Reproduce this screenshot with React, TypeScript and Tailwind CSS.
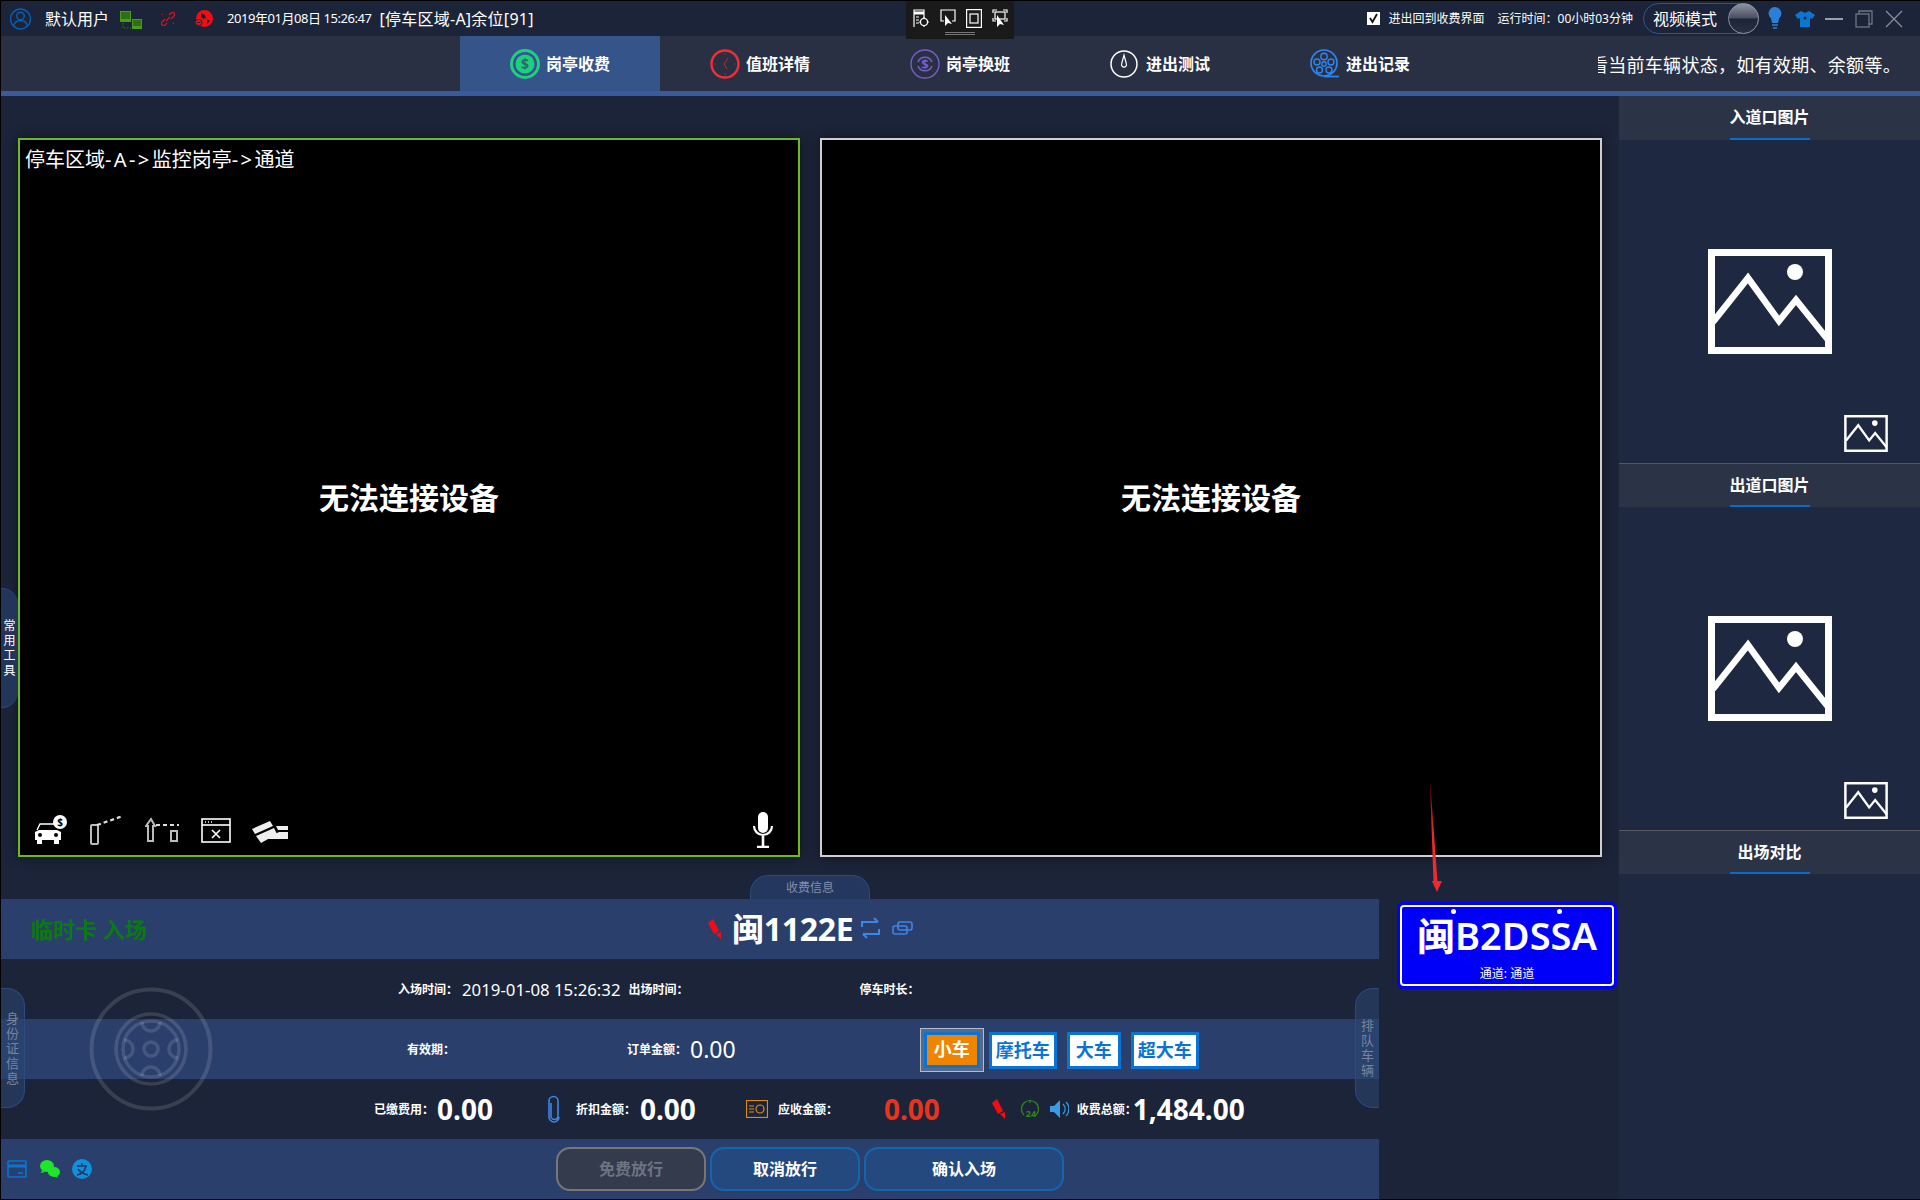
import React from "react";

const FONT = { fontFamily: '"Noto Sans", "Noto Sans CJK SC", sans-serif' };

// ---- small drawn icons ----
function DollarIcon() {
  return (
    <svg width="30" height="30" viewBox="0 0 30 30" fill="none">
      <circle cx="15" cy="15" r="13.5" stroke="#1fcf7f" strokeWidth="3" />
      <circle cx="15" cy="15" r="9.5" fill="#1fcf7f" />
      <text x="15" y="20" textAnchor="middle" fontSize="14" fontWeight="700" fill="#2a6a6a">$</text>
    </svg>
  );
}

function ClockIcon() {
  return (
    <svg width="30" height="30" viewBox="0 0 30 30" fill="none">
      <ellipse cx="15" cy="15" rx="13.5" ry="13.5" stroke="#ef2e38" strokeWidth="2.4" />
      <path d="M18 9l-4 6 3 5" stroke="#c8242f" strokeWidth="1" />
      <path d="M15 4v2M15 24v2M4 15h2M24 15h2" stroke="#7a2a3a" strokeWidth="1.4" />
    </svg>
  );
}

function ShiftIcon() {
  return (
    <svg width="30" height="30" viewBox="0 0 30 30" fill="none">
      <circle cx="15" cy="15" r="14" stroke="#7a5cc8" strokeWidth="1.4" />
      <path d="M8 17a7.5 7.5 0 0 0 14 0M8 13a7.5 7.5 0 0 1 14 0" stroke="#7a5cc8" strokeWidth="1.6" />
      <text x="15" y="20" textAnchor="middle" fontSize="13" fontWeight="700" fill="#7a5cc8">$</text>
    </svg>
  );
}

function GaugeIcon() {
  return (
    <svg width="30" height="30" viewBox="0 0 30 30" fill="none">
      <circle cx="14" cy="15" r="13" stroke="#fff" strokeWidth="1.5" />
      <path d="M14 6l-2.4 9a2.5 2.5 0 1 0 4.8 0z" stroke="#fff" strokeWidth="1.2" />
    </svg>
  );
}

function ReelIcon() {
  return (
    <svg width="30" height="30" viewBox="0 0 30 30" fill="none" stroke="#2e86ee" strokeWidth="1.4">
      <circle cx="14" cy="14" r="13" strokeWidth="1.7" />
      <circle cx="14" cy="7.5" r="3.2" />
      <circle cx="14" cy="15" r="2.2" />
      <circle cx="7" cy="13" r="3" />
      <circle cx="21" cy="13" r="3" />
      <circle cx="9.5" cy="21" r="3" />
      <circle cx="19" cy="21" r="3" />
      <path d="M14 27.5h15" strokeWidth="1.7" />
    </svg>
  );
}

function ImageIcon({ big }: { big?: boolean }) {
  return (
    <svg width={big ? 124 : 44} height={big ? 105 : 37} viewBox="0 0 124 105" fill="none" stroke="#fff">
      <rect x="3.5" y="3.5" width="117" height="98" strokeWidth="7" />
      <path d="M5 73l35-44 31 43 17-21 33 41" strokeWidth="6.5" />
      <circle cx="87" cy="23" r="8" fill="#fff" stroke="none" />
    </svg>
  );
}

function PinIcon({ className = "" }: { className?: string }) {
  return (
    <svg width="15" height="24" viewBox="0 0 15 24" className={className}>
      <path d="M1 6l5-4 6 12-5 3z" fill="#f40c12" />
      <path d="M9 17l5-2 0 7z" fill="#f40c12" />
    </svg>
  );
}

function PlateTools() {
  return (
    <div className="flex items-center gap-[12px] ml-[8px] mt-[-2px]">
      <svg width="19" height="22" viewBox="0 0 19 22" fill="none" stroke="#3c86e6" strokeWidth="2">
        <path d="M1 10V5h16M13 1l4 4M18 12v5H2M6 21l-4-4" />
      </svg>
      <svg width="21" height="14" viewBox="0 0 21 14" fill="none" stroke="#3c86e6" strokeWidth="1.6">
        <rect x="6" y="1" width="14" height="8" rx="2" />
        <rect x="1" y="5" width="14" height="8" rx="2" />
      </svg>
    </div>
  );
}

function Tab({ icon, label, active }: { icon: React.ReactNode; label: string; active?: boolean }) {
  return (
    <div className={`w-[200px] h-full flex items-center pl-[50px] gap-[6px] ${active ? "bg-[#34548a]" : ""}`}>
      {icon}
      <span className="text-[16px] font-bold text-white whitespace-nowrap">{label}</span>
    </div>
  );
}

function PanelHead({ label, line }: { label: string; line?: boolean }) {
  return (
    <div className={`h-[44px] bg-[#2b3346] flex justify-center shrink-0 ${line ? "border-t border-[#55585f]" : ""}`}>
      <div className="h-full w-[80px] border-b-2 border-[#0a6cc4] flex items-center justify-center">
        <span className="text-[16px] font-bold text-white whitespace-nowrap">{label}</span>
      </div>
    </div>
  );
}

function PanelImages() {
  return (
    <div className="h-[323px] flex flex-col pt-[109px]">
      <div className="self-center"><ImageIcon big /></div>
      <div className="self-end mt-[61px] mr-[32px]"><ImageIcon /></div>
    </div>
  );
}

function Label({ text, className = "" }: { text: string; className?: string }) {
  return <span className={`text-[12px] font-bold text-white whitespace-nowrap mt-[2px] ${className}`}>{text}</span>;
}

function Amount({ text, className = "" }: { text: string; className?: string }) {
  return <span className={`text-[28px] leading-none font-bold whitespace-nowrap ${className}`}>{text}</span>;
}

function TypeBtn({ text, w, gap }: { text: string; w: string; gap: string }) {
  return (
    <div className={`${w} ${gap} h-[37px] mt-[2px] bg-white border-[3px] border-[#0a74d6] flex items-center justify-center text-[18px] font-bold text-[#0a74d6] whitespace-nowrap`}>
      {text}
    </div>
  );
}

function SideTab({ text, className }: { text: string; className: string }) {
  return (
    <div className={`absolute flex flex-col items-center justify-center w-[24px] h-[120px] leading-[15px] ${className}`}>
      {text.split("").map((c, i) => (
        <span key={i}>{c}</span>
      ))}
    </div>
  );
}

function VideoBar() {
  return (
    <div className="absolute left-[14px] right-[23px] bottom-[10px] flex items-end text-white">
      {/* car with coin */}
      <svg width="34" height="30" viewBox="0 0 34 30" fill="none" className="mr-[21px]">
        <path d="M3 15l3-6h14" stroke="#fff" strokeWidth="1.4" />
        <path d="M1 17l4-2h18l4 2v8H1z" fill="#fff" />
        <path d="M3 25h5v4H3zM20 25h5v4h-5z" fill="#fff" />
        <circle cx="6" cy="20" r="2" fill="#000" />
        <circle cx="22" cy="20" r="2" fill="#000" />
        <circle cx="26" cy="7" r="7" fill="#fff" />
        <text x="26" y="11" textAnchor="middle" fontSize="10" fontWeight="700" fill="#000">$</text>
      </svg>
      {/* barrier up */}
      <svg width="36" height="30" viewBox="0 0 36 30" fill="none" className="mr-[20px]">
        <rect x="2" y="10" width="7" height="19" rx="1" stroke="#bbb" strokeWidth="2" />
        <path d="M8 10L34 1" stroke="#ddd" strokeWidth="2.2" strokeDasharray="4 3" />
      </svg>
      {/* barrier down */}
      <svg width="34" height="26" viewBox="0 0 34 26" fill="none" className="mr-[22px] mb-[2px]">
        <path d="M3 24V9H1l5-7 4 7H8v15z" stroke="#bbb" strokeWidth="2" />
        <path d="M11 8h23" stroke="#ddd" strokeWidth="2.2" strokeDasharray="4 3" />
        <rect x="26" y="14" width="6" height="10" stroke="#bbb" strokeWidth="2" />
      </svg>
      {/* window close */}
      <svg width="30" height="25" viewBox="0 0 30 25" fill="none" stroke="#fff" className="mr-[21px] mb-[2px]">
        <rect x="1" y="1" width="28" height="23" strokeWidth="1.6" />
        <path d="M1 7h28" strokeWidth="1.6" />
        <path d="M4 4h1M7 4h1M10 4h1" strokeWidth="1.6" />
        <path d="M11 12l8 8M19 12l-8 8" strokeWidth="1.6" />
      </svg>
      {/* cards */}
      <svg width="37" height="24" viewBox="0 0 37 24" fill="#eee" className="mb-[1px]">
        <path d="M0 9L18 1l3 5L3 14z" />
        <path d="M4 16l18-8 3 6-16 9z" />
        <path d="M24 6h12v4H26z" />
        <path d="M27 12h9v7H14z" />
      </svg>
      <svg width="24" height="36" viewBox="0 0 24 36" fill="none" className="ml-auto mb-[-3px]">
        <rect x="7" y="0" width="10" height="21" rx="5" fill="#fff" />
        <path d="M3 14a9 9 0 0 0 18 0" stroke="#fff" strokeWidth="2.2" />
        <path d="M12 24v10M6 35h12" stroke="#fff" strokeWidth="2.6" />
      </svg>
    </div>
  );
}

export default function App() {
  return (
    <div className="relative w-[1920px] h-[1200px] overflow-hidden bg-[#1c2439] border-l border-t border-b border-black text-white flex flex-col" style={FONT}>
      {/* ---- title bar ---- */}
      <div className="h-[35px] shrink-0 flex items-center pl-[9px] pr-[17px]">
        <svg width="21" height="26" viewBox="0 0 21 26" fill="none" stroke="#0a5fae" strokeWidth="1.4">
          <circle cx="10.5" cy="13" r="10" />
          <circle cx="10.5" cy="10" r="3.8" />
          <path d="M3.5 20c1-4 4-5.5 7-5.5s6 1.500 7 5.500" />
        </svg>
        <span className="ml-[14px] text-[16px] whitespace-nowrap">默认用户</span>
        <svg width="22" height="18" viewBox="0 0 22 18" className="ml-[11px] mt-[2px]" fill="none">
          <rect x="0.500" y="0.500" width="10" height="8" fill="#2f6e12" stroke="#4c9a1c" />
          <path d="M0 9h11v2H0z" fill="#4c9a1c" />
          <rect x="12.500" y="8.500" width="9" height="7" fill="#2f6e12" stroke="#4c9a1c" />
          <path d="M12 16h10v2H12z" fill="#4c9a1c" />
          <path d="M3 12v5h8" stroke="#2f7012" strokeWidth="1.200" strokeDasharray="1.500 1.500" />
        </svg>
        <svg width="14" height="14" viewBox="0 0 14 14" fill="none" stroke="#d8121a" strokeWidth="1.300" className="ml-[19px] mt-[1px]">
          <path d="M8 3l2-2a2 2 0 0 1 3 3l-3 3" />
          <path d="M6 11l-2 2a2 2 0 0 1-3-3l3-3" />
          <path d="M5 9l4-4" />
          <path d="M1 2l1 1M12 11l1 1" strokeDasharray="1 1" />
        </svg>
        <svg width="18" height="17" viewBox="0 0 18 17" className="ml-[20px]">
          <circle cx="9.500" cy="8.500" r="8.500" fill="#f30c10" />
          <path d="M6 3l4 2 1 3-3 1-2-2zM12 9l3 2-3 3z" fill="#1c2439" />
          <ellipse cx="3.500" cy="12.500" rx="3.500" ry="3" fill="#f30c10" stroke="#1c2439" />
          <path d="M1.500 12.500h4" stroke="#1c2439" />
        </svg>
        <span className="ml-[14px] text-[13px] whitespace-nowrap tracking-[-0.45px]">2019年01月08日 15:26:47</span>
        <span className="ml-[8px] text-[16px] whitespace-nowrap tracking-[0.25px]">[停车区域-A]余位[91]</span>

        <div className="ml-auto flex items-center">
          <div className="w-[13px] h-[13px] bg-white flex items-center justify-center">
            <svg width="11" height="11" viewBox="0 0 11 11" fill="none" stroke="#111" strokeWidth="1.800">
              <path d="M2 5l2.500 4L9 1" />
            </svg>
          </div>
          <span className="ml-[9px] text-[12px] whitespace-nowrap">进出回到收费界面</span>
          <span className="ml-[13px] text-[12px] whitespace-nowrap">运行时间：00小时03分钟</span>
          <div className="ml-[10px] w-[116px] h-[31px] rounded-full border border-[#2f5590] flex items-center pl-[9px] relative">
            <span className="text-[16px] whitespace-nowrap">视频模式</span>
            <div className="absolute right-[-1px] top-[-1px] w-[31px] h-[31px] rounded-full border border-[#8a8f9c] bg-[linear-gradient(#8d93a0_0%,#4a4f60_48%,#1c2438_52%,#2a3044_100%)]" />
          </div>
          <svg width="14" height="26" viewBox="0 0 14 26" className="ml-[9px]">
            <path d="M7 1a6.500 6.500 0 0 1 4 11.500L10 17H4l-1-4.500A6.500 6.500 0 0 1 7 1z" fill="#2a80d8" />
            <path d="M4 19h6M5 22h4" stroke="#2a80d8" strokeWidth="1.600" />
          </svg>
          <svg width="20" height="16" viewBox="0 0 20 16" className="ml-[13px]">
            <path d="M6 0l4 2 4-2 6 4-3 4-2-1v9H5V7L3 8 0 4z" fill="#0a76d0" />
            <circle cx="10" cy="7" r="1.500" fill="#1c2438" />
          </svg>
          <div className="ml-[10px] w-[18px] h-[2px] bg-[#9aa0ac]" />
          <svg width="18" height="18" viewBox="0 0 18 18" fill="none" stroke="#6f7584" strokeWidth="1.300" className="ml-[12px]">
            <path d="M4 4V1h13v13h-3" />
            <rect x="1" y="4" width="13" height="13" />
          </svg>
          <svg width="18" height="18" viewBox="0 0 18 18" fill="none" stroke="#8a8f9c" strokeWidth="1.200" className="ml-[12px]">
            <path d="M1 1l16 16M17 1L1 17" />
          </svg>
        </div>
      </div>

      {/* ---- nav row ---- */}
      <div className="h-[60px] shrink-0 bg-[#2a3044] border-b-[5px] border-[#3a5a9a] flex items-stretch pl-[459px]">
        <Tab active icon={<DollarIcon />} label="岗亭收费" />
        <Tab icon={<ClockIcon />} label="值班详情" />
        <Tab icon={<ShiftIcon />} label="岗亭换班" />
        <Tab icon={<GaugeIcon />} label="进出测试" />
        <Tab icon={<ReelIcon />} label="进出记录" />
        <div className="ml-[138px] w-[303px] overflow-hidden flex justify-end items-center pt-[3px]">
          <span className="shrink-0 text-[18px] tracking-[0.3px] whitespace-nowrap">看当前车辆状态，如有效期、余额等。</span>
        </div>
      </div>

      {/* ---- main ---- */}
      <div className="flex-1 flex min-h-0">
        <div className="relative w-[1618px] shrink-0 flex flex-col">
          <div className="flex gap-[20px] pl-[17px] pt-[42px]">
            <div className="relative w-[782px] h-[719px] bg-black border-2 border-[#6fb81f] flex items-center justify-center shadow-[0_0_12px_rgba(0,0,0,0.45)]">
              <span className="absolute left-[5px] top-[5px] text-[20px] whitespace-nowrap">
                停车区域<span className="tracking-[2.4px]">-A-&gt;</span>监控岗亭<span className="tracking-[2.4px]">-&gt;</span>通道
              </span>
              <span className="text-[30px] font-bold">无法连接设备</span>
              <VideoBar />
            </div>
            <div className="w-[782px] h-[719px] bg-black border-2 border-[#cfcfcf] flex items-center justify-center shadow-[0_0_12px_rgba(0,0,0,0.45)]">
              <span className="text-[30px] font-bold">无法连接设备</span>
            </div>
          </div>

          <div className="h-[18px]" />
          <div className="h-[24px] pl-[749px]">
            <div className="w-[120px] h-full bg-[#24375e] border border-b-0 border-[#2a4a80] rounded-t-[18px] text-[12px] text-[#8290a8] flex items-center justify-center">收费信息</div>
          </div>

          {/* ---- charge info ---- */}
          <div className="flex">
            <div className="w-[1378px] shrink-0">
              <div className="h-[60px] bg-[#2a3f6c] flex items-center">
                <span className="ml-[30px] w-[676px] text-[22px] font-bold text-[#0a7a10] whitespace-nowrap">临时卡 入场</span>
                <PinIcon />
                <span className="ml-[10px] text-[32px] leading-none font-bold tracking-[-0.3px] whitespace-nowrap">闽1122E</span>
                <PlateTools />
              </div>
              <div className="h-[60px] flex items-center">
                <Label text="入场时间：" className="ml-[397px]" />
                <span className="ml-[4px] text-[16.8px] mt-[1px] whitespace-nowrap">2019-01-08 15:26:32</span>
                <Label text="出场时间：" className="ml-[8px]" />
                <Label text="停车时长：" className="ml-[171px]" />
              </div>
              <div className="h-[60px] bg-[#2a3f6c] flex items-center">
                <Label text="有效期：" className="ml-[406px]" />
                <Label text="订单金额：" className="ml-[172px]" />
                <span className="ml-[3px] text-[23px] mt-[1px] whitespace-nowrap">0.00</span>
                <div className="ml-[184px] w-[64px] h-[44px] border border-[#b8bcc6] bg-[#566a8e] p-[3px] flex items-stretch mt-[1px]">
                  <div className="flex-1 bg-[#ee8400] border-[3px] border-[#0a74d6] flex items-center justify-center text-[18px] font-bold whitespace-nowrap">小车</div>
                </div>
                <TypeBtn text="摩托车" w="w-[68px]" gap="ml-[5px]" />
                <TypeBtn text="大车" w="w-[54px]" gap="ml-[10px]" />
                <TypeBtn text="超大车" w="w-[68px]" gap="ml-[10px]" />
              </div>
              <div className="h-[60px] flex items-center">
                <Label text="已缴费用：" className="ml-[373px]" />
                <Amount text="0.00" className="ml-[3px]" />
                <svg width="14" height="28" viewBox="0 0 14 28" fill="none" stroke="#3c86e6" strokeWidth="1.600" className="ml-[54px]">
                  <path d="M4 8v13a3.500 3.500 0 0 0 7 0V6a4.500 4.500 0 0 0-9 0v16a5 5 0 0 0 10 0" />
                </svg>
                <Label text="折扣金额：" className="ml-[15px]" />
                <Amount text="0.00" className="ml-[4px]" />
                <svg width="22" height="18" viewBox="0 0 22 18" fill="none" stroke="#e08a1c" strokeWidth="1.200" className="ml-[50px]">
                  <rect x="0.500" y="0.500" width="21" height="17" />
                  <path d="M3 6h5M3 9h5M3 12h5" />
                  <circle cx="14" cy="9" r="4" />
                </svg>
                <Label text="应收金额：" className="ml-[10px]" />
                <Amount text="0.00" className="ml-[46px] text-[#e8341e]" />
                <PinIcon className="ml-[51px]" />
                <svg width="18" height="24" viewBox="0 0 18 24" fill="none" stroke="#2f8a18" strokeWidth="1.200" className="ml-[15px]">
                  <path d="M3 18a8.500 8.500 0 1 1 12 0" />
                  <path d="M9 3v3" />
                  <text x="10" y="20" textAnchor="middle" fontSize="9" fontWeight="700" fill="#2f8a18" stroke="none">24</text>
                </svg>
                <svg width="19" height="20" viewBox="0 0 19 20" className="ml-[11px]">
                  <path d="M0 7h4l6-6v18l-6-6H0z" fill="#3c9be6" />
                  <path d="M13 5a7 7 0 0 1 0 10M16 3a10 10 0 0 1 0 14" stroke="#3c9be6" strokeWidth="1.200" fill="none" />
                </svg>
                <Label text="收费总额：" className="ml-[8px]" />
                <Amount text="1,484.00" className="ml-[-4px]" />
              </div>
              <div className="h-[60px] bg-[#2a3f6c] flex items-center">
                <svg width="20" height="18" viewBox="0 0 20 18" fill="none" stroke="#0a76d0" strokeWidth="1.600" className="ml-[6px]">
                  <rect x="1" y="1" width="18" height="16" rx="1" />
                  <path d="M1 6h18" strokeWidth="3" />
                  <path d="M11 13h5" />
                </svg>
                <svg width="20" height="20" viewBox="0 0 20 20" fill="#1ee62a" className="ml-[13px]">
                  <ellipse cx="7" cy="7" rx="7" ry="6" />
                  <ellipse cx="14" cy="13" rx="6" ry="5" />
                  <path d="M2 11l-1 3 4-1zM17 16l1 3-4-2z" />
                </svg>
                <svg width="20" height="20" viewBox="0 0 20 20" className="ml-[12px]">
                  <circle cx="10" cy="10" r="10" fill="#0f8fdc" />
                  <path d="M5 7h10M10 4v3M14 7c-1 5-4 8-9 9M6 10c2 3 6 5 10 6" stroke="#24375e" strokeWidth="1.500" fill="none" />
                </svg>
                <div className="ml-[464px] w-[150px] h-[44px] rounded-[14px] border-2 border-[#777] bg-[#343b4c] text-[#6d7482] text-[16px] font-bold flex items-center justify-center">免费放行</div>
                <div className="ml-[4px] w-[150px] h-[44px] rounded-[14px] border-2 border-[#1565ac] bg-[#24497f] text-[16px] font-bold flex items-center justify-center">取消放行</div>
                <div className="ml-[4px] w-[200px] h-[44px] rounded-[14px] border-2 border-[#1565ac] bg-[#24497f] text-[16px] font-bold flex items-center justify-center">确认入场</div>
              </div>
            </div>

            {/* ---- recognised plate ---- */}
            <div className="pl-[18px] pt-[3px]">
              <div className="relative w-[220px] h-[87px] bg-[#0000fa] rounded-[6px] p-[3px]">
                <div className="h-full rounded-[4px] border-2 border-white flex flex-col items-center">
                  <span className="text-[38px] leading-[50px] mt-[3px] font-semibold whitespace-nowrap">闽B2DSSA</span>
                  <span className="text-[12px] leading-[14px] mt-[7px] whitespace-nowrap">通道: 通道</span>
                </div>
                <div className="absolute left-[54px] top-[7px] w-[5px] h-[5px] rounded-full bg-white" />
                <div className="absolute left-[160px] top-[7px] w-[5px] h-[5px] rounded-full bg-white" />
              </div>
            </div>
          </div>

          {/* ---- floating tabs and overlays ---- */}
          <SideTab text="常用工具" className="left-0 top-[492px] !w-[17px] rounded-r-[16px] bg-[#233558] border-y border-[#2a4a80] text-white text-[12px]" />
          <SideTab text="身份证信息" className="left-0 top-[892px] rounded-r-[18px] bg-[#2c4470]/60 border border-l-0 border-[#2a4a80] text-[#79849c] text-[13px]" />
          <SideTab text="排队车辆" className="left-[1354px] top-[892px] rounded-l-[18px] bg-[#2c4470]/60 border border-r-0 border-[#2a4a80] text-[#79849c] text-[13px]" />
          <svg width="124" height="124" viewBox="0 0 124 124" fill="none" stroke="#ffffff" strokeOpacity="0.13" strokeWidth="3.500" className="absolute left-[88px] top-[891px]">
            <circle cx="62" cy="62" r="59.500" strokeWidth="4" />
            <circle cx="62" cy="62" r="35" />
            <circle cx="62" cy="62" r="28" />
            <circle cx="62" cy="62" r="7" />
            <path d="M53 35a9 9 0 0 0 18 0" />
            <path d="M53 89a9 9 0 0 1 18 0" />
            <path d="M35 53a9 9 0 0 1 0 18" />
            <path d="M89 53a9 9 0 0 0 0 18" />
          </svg>
          <svg width="24" height="112" viewBox="0 0 24 112" className="absolute left-[1419px] top-[688px]">
            <defs>
              <linearGradient id="arrow" x1="0" y1="0" x2="0" y2="1">
                <stop offset="0" stopColor="#5a0a14" />
                <stop offset="0.5" stopColor="#ee2a30" />
              </linearGradient>
            </defs>
            <path d="M10 1l.5 0 7 97h-4z" fill="url(#arrow)" />
            <path d="M12 97h10l-5 11z" fill="#ee2a30" />
          </svg>
        </div>

        {/* ---- right panel ---- */}
        <div className="w-[301px] shrink-0 bg-[#1e2840] flex flex-col">
          <PanelHead label="入道口图片" />
          <PanelImages />
          <PanelHead line label="出道口图片" />
          <PanelImages />
          <PanelHead line label="出场对比" />
        </div>
      </div>

      {/* ---- screen capture toolbar ---- */}
      <div className="absolute left-[905px] top-[-1px] w-[108px] h-[39px] bg-[#1a1a1a] flex flex-col items-center">
        <div className="flex gap-[10px] mt-[9px]">
          <svg width="16" height="19" viewBox="0 0 16 19" fill="none" stroke="#fff" strokeWidth="1.200">
            <path d="M1 18V1h10v8" />
            <path d="M1 4h10" strokeWidth="3" />
            <path d="M3 8h3M3 11h3M3 14h3" />
            <circle cx="11" cy="13" r="3.500" />
            <path d="M11 8v2M11 16v2M6 13h2M14 13h2" />
          </svg>
          <svg width="16" height="19" viewBox="0 0 16 19" fill="none" stroke="#fff" strokeWidth="1.200" className="ml-[1px]">
            <path d="M4 12H1V1h14v11h-3" />
            <path d="M5 6l0 11 3-3 4 1z" fill="#fff" stroke="none" />
          </svg>
          <svg width="16" height="19" viewBox="0 0 16 19" fill="none" stroke="#fff" strokeWidth="1.200">
            <rect x="0.600" y="0.600" width="14.800" height="17.800" />
            <rect x="4" y="5" width="8" height="9" />
          </svg>
          <svg width="16" height="19" viewBox="0 0 16 19" fill="none" stroke="#fff" strokeWidth="1.200">
            <path d="M1 4V1h4M11 1h4v3M1 9v3h3M15 9v3h-3" />
            <rect x="3" y="3" width="10" height="7" />
            <path d="M5 6l0 12 3-3 4 1z" fill="#fff" stroke="none" />
          </svg>
        </div>
        <div className="mt-[4px] w-[30px] h-[3px] border-y border-[#777]" />
      </div>
    </div>
  );
}
